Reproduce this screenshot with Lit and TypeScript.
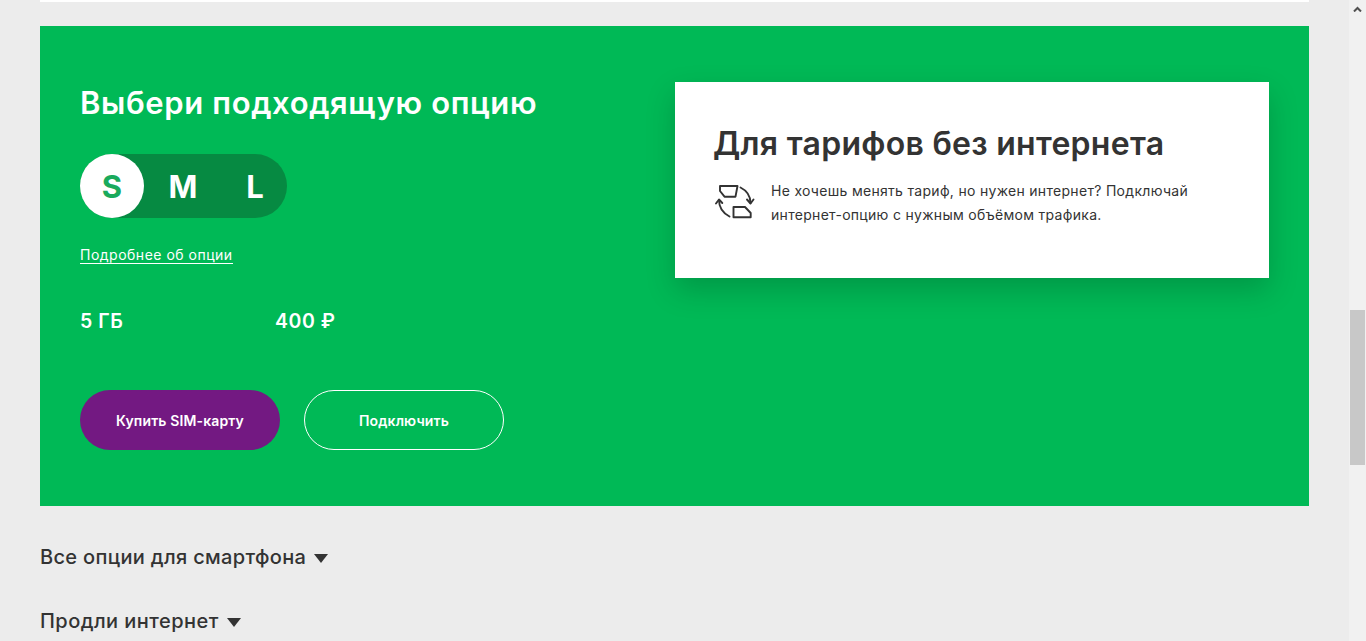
import { LitElement, html, css } from "lit";
import { customElement } from "lit/decorators.js";

@customElement("app-root")
export class AppRoot extends LitElement {
  static styles = css`
    :host { display: flex; width: 1366px; height: 641px; overflow: hidden; background: #ececec; font-family: Inter, "Noto Sans", sans-serif; color: #333; }
    .main { width: 1349px; padding: 0 40px; box-sizing: border-box; flex: none; }
    .topline { height: 2px; background: #fff; }
    .green { margin-top: 24px; height: 480px; box-sizing: border-box; background: #00b956; padding: 56px 40px 0; display: flex; justify-content: space-between; align-items: flex-start; color: #fff; }
    .left { width: 520px; display: flex; flex-direction: column; align-items: flex-start; }
    h2 { margin: -1px 0 0; font-size: 31px; line-height: 44px; font-weight: 600; letter-spacing: 0.62px; white-space: nowrap; }
    .sizes { margin-top: 29px; width: 207px; height: 64px; border-radius: 32px; background: #068a42; display: flex; align-items: center; font-size: 31px; font-weight: 700; }
    .size { width: 64px; height: 64px; border-radius: 50%; display: flex; align-items: center; justify-content: center; flex: none; }
    .size.on { background: #fff; color: #1aaa5c; }
    .size.m { width: 78px; }
    .size.l { width: 46px; margin-left: 10px; }
    .more { margin-top: 27px; font-size: 14px; line-height: 20px; letter-spacing: 0.5px; color: #fff; border-bottom: 1px solid #fff; }
    .more span { display: block; margin-bottom: -2px; }
    .facts { margin-top: 43px; display: flex; font-size: 19.5px; line-height: 28px; font-weight: 600; letter-spacing: 0.55px; }
    .facts .a { width: 195px; }
    .btns { margin-top: 55px; display: flex; gap: 24px; }
    .btn { width: 200px; height: 60px; border-radius: 30px; box-sizing: border-box; display: flex; align-items: center; justify-content: center; font-size: 14px; font-weight: 600; letter-spacing: 0.13px; }
    .buy { background: #731982; }
    .conn { border: 1px solid #fff; }
    .card { width: 594px; height: 196px; box-sizing: border-box; background: #fff; box-shadow: 0 12px 28px rgba(0,0,0,.18); padding: 40px 38px 0; color: #333; }
    h3 { margin: 0; font-size: 32px; line-height: 44px; font-weight: 600; color: #333; letter-spacing: 0.28px; white-space: nowrap; }
    .row { margin-top: 13px; display: flex; gap: 16px; }
    .row svg { flex: none; margin-top: 2px; }
    .row p { margin: 0; font-size: 14px; line-height: 24px; color: #333; letter-spacing: 0.3px; }
    .link { display: flex; align-items: center; gap: 8px; font-size: 20px; line-height: 28px; font-weight: 500; color: #333; letter-spacing: 0.33px; }
    .link.a { margin-top: 37px; }
    .link.b { margin-top: 36px; letter-spacing: 0.45px; }
    .tri { width: 0; height: 0; border-left: 7.5px solid transparent; border-right: 7.5px solid transparent; border-top: 9px solid #333; margin-top: 2px; }
    .bar { width: 17px; flex: none; background: #f1f1f1; display: flex; flex-direction: column; align-items: center; }
    .up { height: 17px; display: flex; align-items: center; justify-content: center; }
    .thumb { margin-top: 293px; width: 15px; height: 155px; background: #c8c8c8; }
  `;

  render() {
    return html`
      <div class="main">
        <div class="topline"></div>
        <section class="green">
          <div class="left">
            <h2>Выбери подходящую опцию</h2>
            <div class="sizes">
              <div class="size on">S</div>
              <div class="size m">M</div>
              <div class="size l">L</div>
            </div>
            <a class="more"><span>Подробнее об опции</span></a>
            <div class="facts"><div class="a">5 ГБ</div><div>400 ₽</div></div>
            <div class="btns">
              <div class="btn buy">Купить SIM-карту</div>
              <div class="btn conn">Подключить</div>
            </div>
          </div>
          <div class="card">
            <h3>Для тарифов без интернета</h3>
            <div class="row">
              <svg width="42" height="38" viewBox="0 0 42 38" fill="none" stroke="#333" stroke-width="1.9" stroke-linejoin="round" stroke-linecap="round">
                <path d="M7 5H24.5L22.5 15.7H11.5L7 10Z"/>
                <path d="M20.5 26H32L37.7 32V36.3H20.5Z"/>
                <path d="M27.5 6.5Q37.5 11.5 37.5 22"/>
                <path d="M34 18.5L37.5 22.5L40.5 18.5"/>
                <path d="M16.5 35.5Q6 30 6 19"/>
                <path d="M3 22.5L6 18.5L9.3 22"/>
              </svg>
              <p>Не хочешь менять тариф, но нужен интернет? Подключай<br>интернет-опцию с нужным объёмом трафика.</p>
            </div>
          </div>
        </section>
        <div class="link a">Все опции для смартфона <span class="tri"></span></div>
        <div class="link b">Продли интернет <span class="tri"></span></div>
      </div>
      <div class="bar">
        <div class="up">
          <svg width="9" height="6" viewBox="0 0 9 6" fill="none" stroke="#505050" stroke-width="2"><path d="M1 5.5L4.5 2L8 5.5"/></svg>
        </div>
        <div class="thumb"></div>
      </div>
    `;
  }
}
